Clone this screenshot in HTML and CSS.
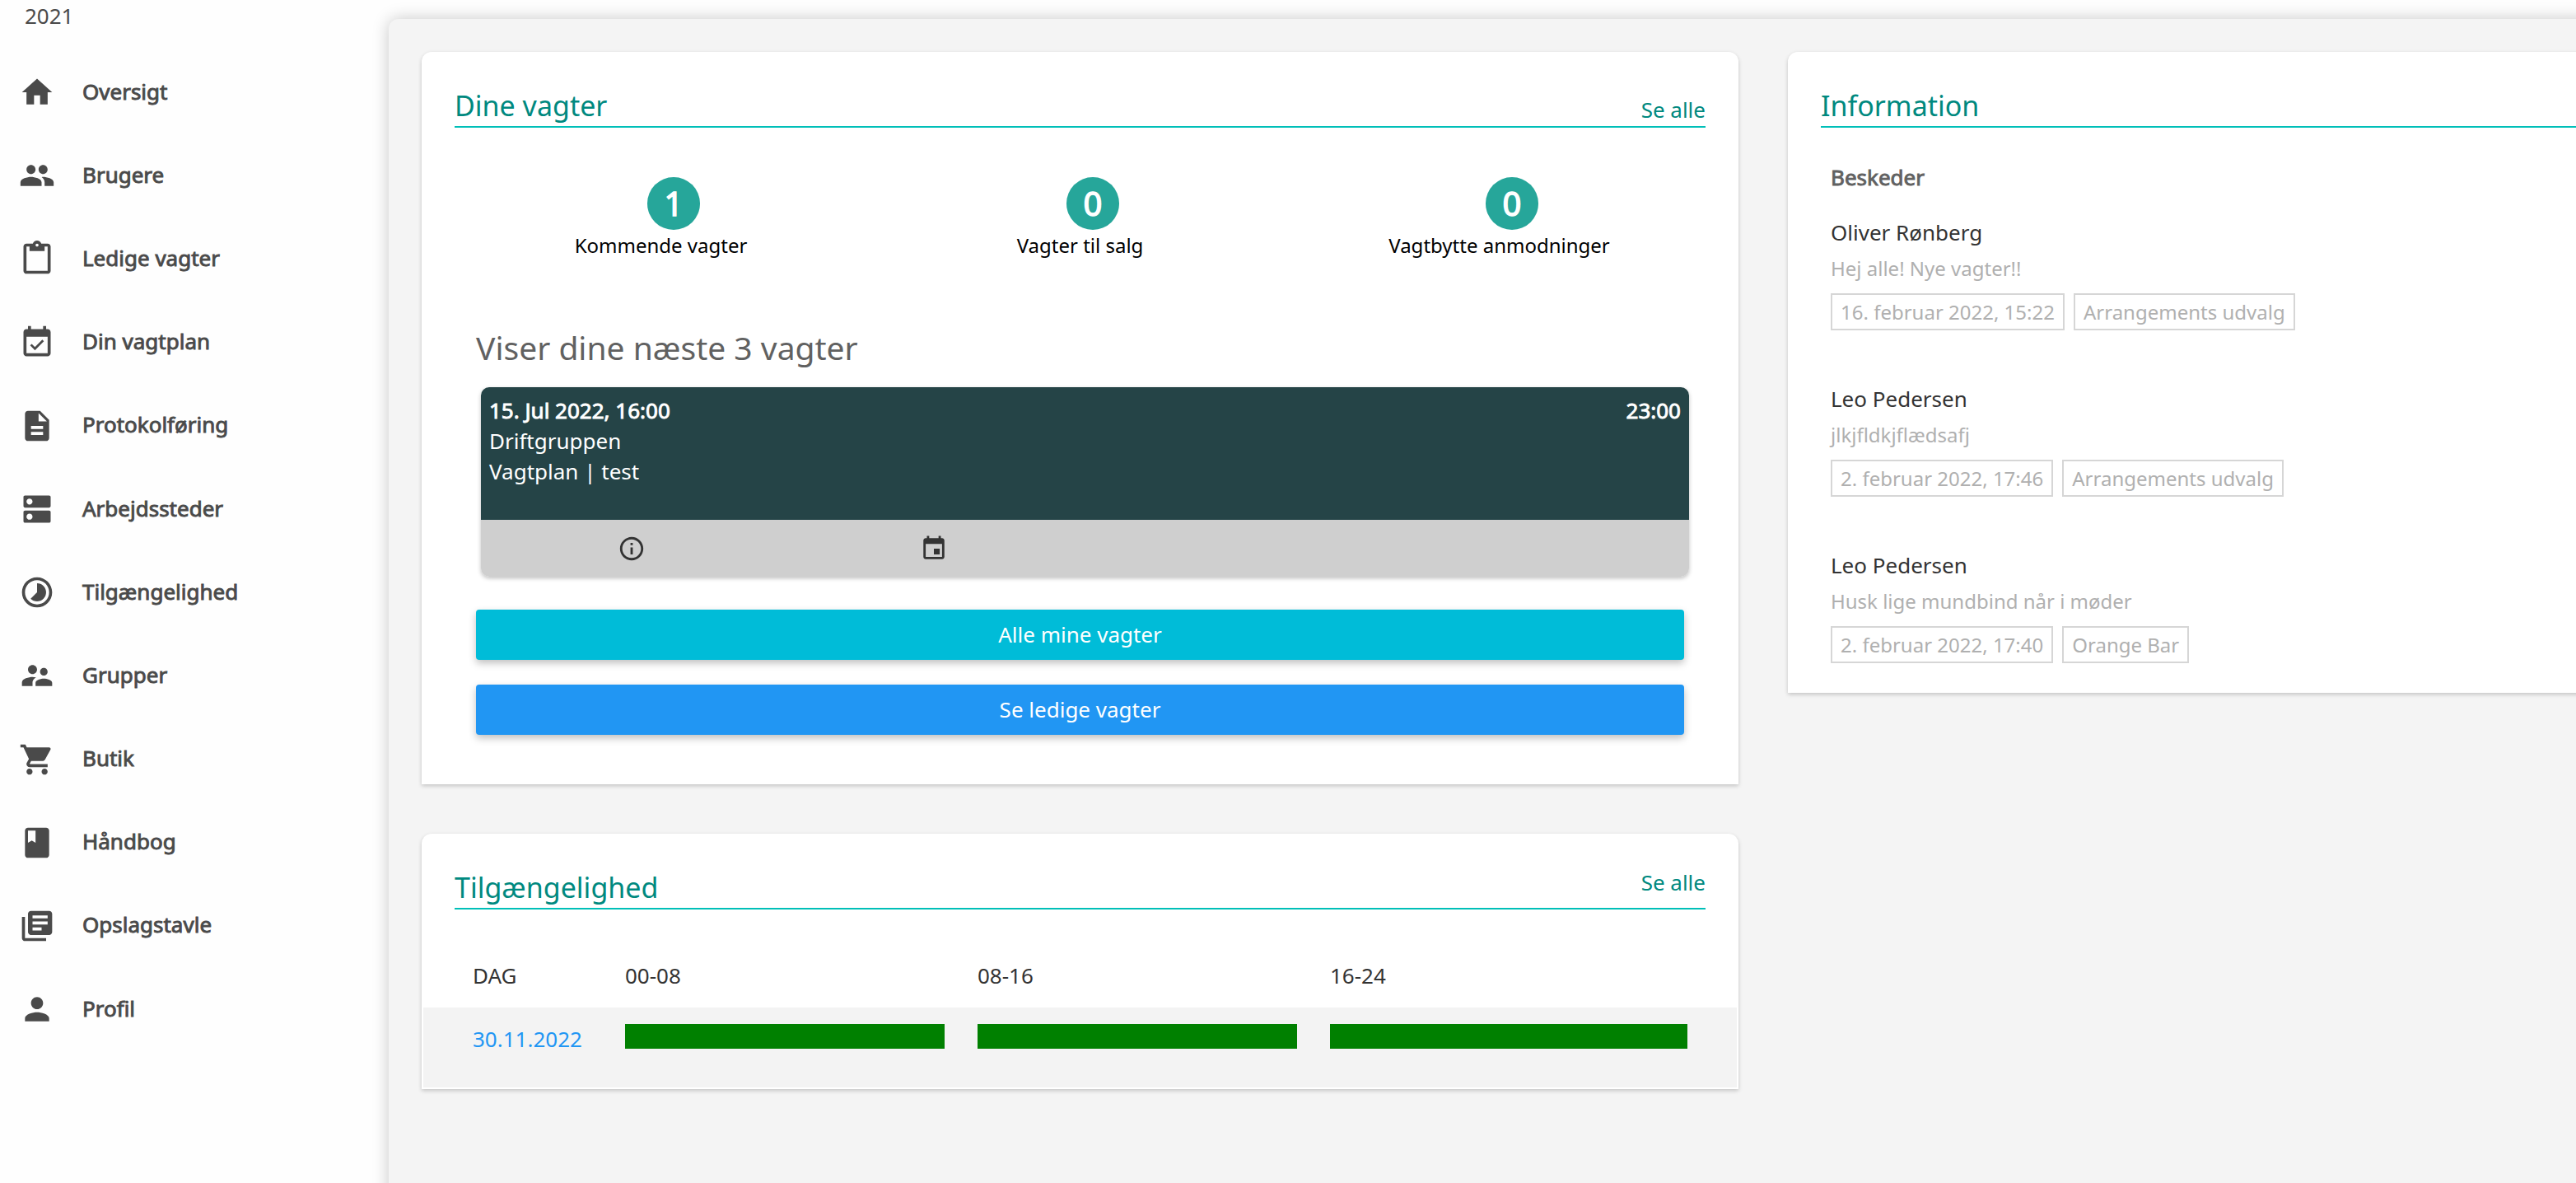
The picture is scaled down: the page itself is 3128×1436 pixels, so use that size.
FILE: index.html
```html
<!DOCTYPE html>
<html lang="da">
<head>
    <meta charset="UTF-8">
    <title>Oversigt</title>
    <link rel="stylesheet" href="styles.css">
</head>
<body>
    <nav class="sidebar">
        <div class="year">2021</div>
        <ul class="menu">
            <li>
                <svg viewBox="0 0 24 24"><path d="M10 20v-6h4v6h5v-8h3L12 3 2 12h3v8z"/></svg>
                <a>Oversigt</a>
            </li>
            <li>
                <svg viewBox="0 0 24 24"><path d="M16 11c1.66 0 2.99-1.34 2.99-3S17.66 5 16 5c-1.66 0-3 1.34-3 3s1.34 3 3 3zm-8 0c1.66 0 2.99-1.34 2.99-3S9.66 5 8 5C6.34 5 5 6.34 5 8s1.34 3 3 3zm0 2c-2.33 0-7 1.17-7 3.5V19h14v-2.500c0-2.330-4.670-3.500-7-3.500zm8 0c-.29 0-.62.02-.97.05 1.160.840 1.970 1.970 1.970 3.450V19h6v-2.500c0-2.330-4.670-3.500-7-3.500z"/></svg>
                <a>Brugere</a>
            </li>
            <li>
                <svg viewBox="0 0 24 24"><path d="M19 2h-4.180C14.400.84 13.300 0 12 0c-1.300 0-2.400.84-2.820 2H5c-1.100 0-2 .9-2 2v16c0 1.100.9 2 2 2h14c1.100 0 2-.9 2-2V4c0-1.100-.9-2-2-2zm-7 0c.55 0 1 .45 1 1s-.45 1-1 1-1-.45-1-1 .45-1 1-1zm7 18H5V4h2v3h10V4h2v16z"/></svg>
                <a>Ledige vagter</a>
            </li>
            <li>
                <svg viewBox="0 0 24 24"><path d="M16.530 11.060L15.470 10l-4.880 4.880-2.120-2.120-1.060 1.060L10.590 17l5.940-5.940zM19 3h-1V1h-2v2H8V1H6v2H5c-1.110 0-1.990.9-1.990 2L3 19c0 1.100.89 2 2 2h14c1.100 0 2-.9 2-2V5c0-1.100-.9-2-2-2zm0 16H5V8h14v11z"/></svg>
                <a>Din vagtplan</a>
            </li>
            <li>
                <svg viewBox="0 0 24 24"><path d="M14 2H6c-1.100 0-1.990.9-1.990 2L4 20c0 1.100.89 2 1.990 2H18c1.100 0 2-.9 2-2V8l-6-6zm2 16H8v-2h8v2zm0-4H8v-2h8v2zm-3-5V3.500L18.500 9H13z"/></svg>
                <a>Protokolføring</a>
            </li>
            <li>
                <svg viewBox="0 0 24 24"><path d="M20 13H4c-.55 0-1 .45-1 1v6c0 .55.45 1 1 1h16c.55 0 1-.45 1-1v-6c0-.55-.45-1-1-1zM7 19c-1.100 0-2-.9-2-2s.9-2 2-2 2 .9 2 2-.9 2-2 2zM20 3H4c-.55 0-1 .45-1 1v6c0 .55.45 1 1 1h16c.55 0 1-.45 1-1V4c0-.55-.45-1-1-1zM7 9c-1.100 0-2-.9-2-2s.9-2 2-2 2 .9 2 2-.9 2-2 2z"/></svg>
                <a>Arbejdssteder</a>
            </li>
            <li>
                <svg viewBox="0 0 24 24"><path d="M16.240 7.760C15.070 6.590 13.540 6 12 6v6l-4.240 4.240c2.340 2.340 6.140 2.340 8.490 0 2.340-2.340 2.340-6.140-.01-8.480zM12 2C6.480 2 2 6.480 2 12s4.480 10 10 10 10-4.480 10-10S17.520 2 12 2zm0 18c-4.420 0-8-3.580-8-8s3.580-8 8-8 8 3.580 8 8-3.580 8-8 8z"/></svg>
                <a>Tilgængelighed</a>
            </li>
            <li>
                <svg viewBox="0 0 24 24"><path d="M16.500 12c1.380 0 2.490-1.120 2.490-2.500S17.880 7 16.500 7C15.120 7 14 8.120 14 9.500s1.120 2.500 2.500 2.500zM9 11c1.660 0 2.990-1.340 2.990-3S10.660 5 9 5C7.340 5 6 6.340 6 8s1.340 3 3 3zm7.500 3c-1.830 0-5.500.92-5.500 2.750V19h11v-2.250c0-1.830-3.670-2.750-5.500-2.750zM9 13c-2.330 0-7 1.170-7 3.500V19h7v-2.250c0-.85.33-2.340 2.370-3.470C10.500 13.100 9.660 13 9 13z"/></svg>
                <a>Grupper</a>
            </li>
            <li>
                <svg viewBox="0 0 24 24"><path d="M7 18c-1.100 0-1.990.9-1.990 2S5.900 22 7 22s2-.9 2-2-.9-2-2-2zM1 2v2h2l3.600 7.590-1.350 2.450c-.16.28-.25.61-.25.96 0 1.100.9 2 2 2h12v-2H7.420c-.14 0-.25-.11-.25-.25l.03-.12.9-1.630h7.450c.75 0 1.410-.41 1.750-1.030l3.580-6.490c.08-.14.12-.31.12-.48 0-.55-.45-1-1-1H5.210l-.94-2H1zm16 16c-1.100 0-1.990.9-1.990 2s.89 2 1.990 2 2-.9 2-2-.9-2-2-2z"/></svg>
                <a>Butik</a>
            </li>
            <li>
                <svg viewBox="0 0 24 24"><path d="M18 2H6c-1.100 0-2 .9-2 2v16c0 1.100.9 2 2 2h12c1.100 0 2-.9 2-2V4c0-1.100-.9-2-2-2zM6 4h5v8l-2.500-1.500L6 12V4z"/></svg>
                <a>Håndbog</a>
            </li>
            <li>
                <svg viewBox="0 0 24 24"><path d="M4 6H2v14c0 1.100.9 2 2 2h14v-2H4V6zm16-4H8c-1.100 0-2 .9-2 2v12c0 1.100.9 2 2 2h12c1.100 0 2-.9 2-2V4c0-1.100-.9-2-2-2zm-1 9H9V9h10v2zm-4 4H9v-2h6v2zm4-8H9V5h10v2z"/></svg>
                <a>Opslagstavle</a>
            </li>
            <li>
                <svg viewBox="0 0 24 24"><path d="M12 12c2.210 0 4-1.790 4-4s-1.790-4-4-4-4 1.790-4 4 1.790 4 4 4zm0 2c-2.670 0-8 1.340-8 4v2h16v-2c0-2.660-5.330-4-8-4z"/></svg>
                <a>Profil</a>
            </li>
        </ul>
    </nav>

    <main class="content">
        <div class="column">
            <section class="card shifts">
                <div class="card-head">
                    <h2>Dine vagter</h2>
                    <a>Se alle</a>
                </div>

                <div class="stats">
                    <div class="stat">
                        <span class="count">1</span>
                        <p>Kommende vagter</p>
                    </div>
                    <div class="stat">
                        <span class="count">0</span>
                        <p>Vagter til salg</p>
                    </div>
                    <div class="stat">
                        <span class="count">0</span>
                        <p>Vagtbytte anmodninger</p>
                    </div>
                </div>

                <div class="upcoming">
                    <h3>Viser dine næste 3 vagter</h3>
                    <div class="shift">
                        <div class="shift-info">
                            <div class="shift-time">
                                <span>15. Jul 2022, 16:00</span>
                                <span>23:00</span>
                            </div>
                            <div>Driftgruppen</div>
                            <div>Vagtplan | test</div>
                        </div>
                        <div class="shift-actions">
                            <svg viewBox="0 0 24 24"><path d="M11 17h2v-6h-2v6zm1-15C6.480 2 2 6.480 2 12s4.480 10 10 10 10-4.480 10-10S17.520 2 12 2zm0 18c-4.410 0-8-3.590-8-8s3.590-8 8-8 8 3.590 8 8-3.590 8-8 8zM11 9h2V7h-2v2z"/></svg>
                            <svg viewBox="0 0 24 24"><path d="M17 12h-5v5h5v-5zM16 1v2H8V1H6v2H5c-1.110 0-1.990.9-1.990 2L3 19c0 1.100.89 2 2 2h14c1.100 0 2-.9 2-2V5c0-1.100-.9-2-2-2h-1V1h-2zm3 18H5V8h14v11z"/></svg>
                        </div>
                    </div>
                    <a class="btn cyan">Alle mine vagter</a>
                    <a class="btn blue">Se ledige vagter</a>
                </div>
            </section>

            <section class="card availability">
                <div class="card-head">
                    <h2>Tilgængelighed</h2>
                    <a>Se alle</a>
                </div>
                <div class="days">
                    <div class="day-row day-head">
                        <span>DAG</span>
                        <span>00-08</span>
                        <span>08-16</span>
                        <span>16-24</span>
                    </div>
                    <div class="day-row day">
                        <a>30.11.2022</a>
                        <div class="bar"></div>
                        <div class="bar"></div>
                        <div class="bar"></div>
                    </div>
                </div>
            </section>
        </div>

        <div class="column">
            <section class="card information">
                <div class="card-head">
                    <h2>Information</h2>
                </div>
                <div class="messages">
                    <h4>Beskeder</h4>
                    <div class="message">
                        <div class="sender">Oliver Rønberg</div>
                        <div class="text">Hej alle! Nye vagter!!</div>
                        <div class="tags">
                            <span>16. februar 2022, 15:22</span>
                            <span>Arrangements udvalg</span>
                        </div>
                    </div>
                    <div class="message">
                        <div class="sender">Leo Pedersen</div>
                        <div class="text">jlkjfldkjflædsafj</div>
                        <div class="tags">
                            <span>2. februar 2022, 17:46</span>
                            <span>Arrangements udvalg</span>
                        </div>
                    </div>
                    <div class="message">
                        <div class="sender">Leo Pedersen</div>
                        <div class="text">Husk lige mundbind når i møder</div>
                        <div class="tags">
                            <span>2. februar 2022, 17:40</span>
                            <span>Orange Bar</span>
                        </div>
                    </div>
                </div>
            </section>
        </div>
    </main>
</body>
</html>
```

FILE: styles.css
```css
* {
    box-sizing: border-box;
}

body {
    margin: 0;
    height: 1436px;
    display: flex;
    overflow: hidden;
    background-color: #fefefe;
    color: #333;
    font-family: "Noto Sans", sans-serif;
    font-size: 26px;
}

h2, h3, h4, p, ul {
    margin: 0;
    padding: 0;
    font-weight: normal;
}

/* Sidebar */
.sidebar {
    flex: 0 0 472px;
    color: #4a4a4a;
}

.year {
    height: 61.5px;
    padding-left: 30px;
    line-height: 38px;
}

.menu {
    list-style: none;
}

.menu li {
    display: flex;
    align-items: center;
    height: 101.2px;
    padding-left: 23px;
}

.menu svg {
    width: 44px;
    height: 44px;
    margin-right: 33px;
    fill: #4a4a4a;
}

.menu a {
    padding-bottom: 3px;
    -webkit-text-stroke: 0.9px #4a4a4a;
}

/* Main panel */
.content {
    flex: 1;
    min-width: 0;
    display: flex;
    align-items: flex-start;
    gap: 60px;
    margin: 23px -30px -30px 0;
    padding: 40px 0 0 40px;
    overflow: hidden;
    background-color: #f4f4f4;
    border-top-left-radius: 12px;
    box-shadow: 0 0 20px rgba(0, 0, 0, 0.22);
}

.column {
    flex: 0 0 1599px;
    display: flex;
    flex-direction: column;
    gap: 60px;
}

/* the right column takes what is left and runs to the window edge */
.column:last-child {
    flex: 1;
    min-width: 0;
}

.card {
    padding: 40px 40px 0;
    background-color: #fff;
    border-radius: 12px 12px 0 0;
    box-shadow: 0 2px 5px rgba(0, 0, 0, 0.2);
}

.card-head {
    display: flex;
    justify-content: space-between;
    align-items: flex-end;
    height: 52px;
    border-bottom: 2px solid #00bfb8;
    color: #00897f;
}

.card-head h2 {
    font-size: 34px;
    line-height: 51px;
    align-self: flex-start;
}

.card-head a {
    line-height: 39px;
}

/* Shifts */
.shifts {
    height: 889px;
}

.stats {
    display: grid;
    grid-template-columns: repeat(3, 1fr);
    margin: 60px -4px 0;
}

.stat {
    display: flex;
    flex-direction: column;
    align-items: center;
    color: #000;
}

.stat p {
    margin-top: 1px;
    font-size: 24px;
    line-height: 36px;
}

.count {
    width: 64px;
    height: 64px;
    margin-left: 31px;
    border-radius: 50%;
    background-color: #26a69a;
    color: #fff;
    font-size: 40px;
    line-height: 64px;
    text-align: center;
    -webkit-text-stroke: 1.4px #fff;
}

.upcoming {
    margin: 75px 26px 0;
}

.upcoming h3 {
    padding-top: 2px;
    color: #616161;
    font-size: 39px;
    line-height: 58px;
}

.shift {
    margin: 19px -6px 40px 6px;
    border-radius: 10px;
    overflow: hidden;
    box-shadow: 0 2px 5px rgba(0, 0, 0, 0.25);
}

.shift-info {
    height: 161px;
    padding: 10px;
    background-color: #254447;
    color: #fff;
    line-height: 37px;
}

.shift-time {
    display: flex;
    justify-content: space-between;
    -webkit-text-stroke: 0.9px #fff;
}

.shift-actions {
    display: grid;
    grid-template-columns: repeat(4, 1fr);
    align-items: center;
    justify-items: center;
    height: 69px;
    background-color: #cfcfcf;
}

.shift-actions svg {
    width: 34px;
    height: 34px;
    fill: #333;
}

.btn {
    display: block;
    height: 61px;
    margin-bottom: 30px;
    border-radius: 4px;
    box-shadow: 0 4px 10px rgba(0, 0, 0, 0.25);
    color: #fff;
    line-height: 60px;
    text-align: center;
}

.cyan {
    background-color: #00bcd8;
}

.blue {
    background-color: #2196f3;
}

/* Availability */
.availability {
    height: 310px;
}

.availability .card-head {
    align-items: flex-start;
}

.days {
    margin: 0 -38px;
}

.day-row {
    display: grid;
    grid-template-columns: 185px 428px 428px 434px;
    padding-left: 60px;
}

.day-head {
    height: 119px;
    padding-top: 60px;
    line-height: 40px;
}

.day {
    height: 97px;
    padding-top: 20px;
    background-color: #f3f3f3;
}

.day a {
    color: #2196f3;
    line-height: 36px;
}

.bar {
    height: 30px;
    margin-right: 40px;
    background-color: #008000;
}

.bar:last-child {
    margin-right: 0;
}

/* Information */
.information {
    height: 778px;
    padding-right: 0;
    border-top-right-radius: 0;
}

.messages {
    padding: 40px 12px 0;
}

.messages h4 {
    color: #616161;
    line-height: 40px;
    -webkit-text-stroke: 0.9px #616161;
}

.message {
    height: 202px;
    padding-top: 27px;
}

.sender {
    line-height: 40px;
}

.text {
    margin-top: 5px;
    color: #b0b0b0;
    font-size: 24px;
    line-height: 38px;
}

.tags {
    display: flex;
    gap: 11px;
    margin-top: 11px;
}

.tags span {
    padding: 0 10px;
    border: 2px solid #d6d6d6;
    color: #b0b0b0;
    font-size: 24px;
    line-height: 41px;
}
```
